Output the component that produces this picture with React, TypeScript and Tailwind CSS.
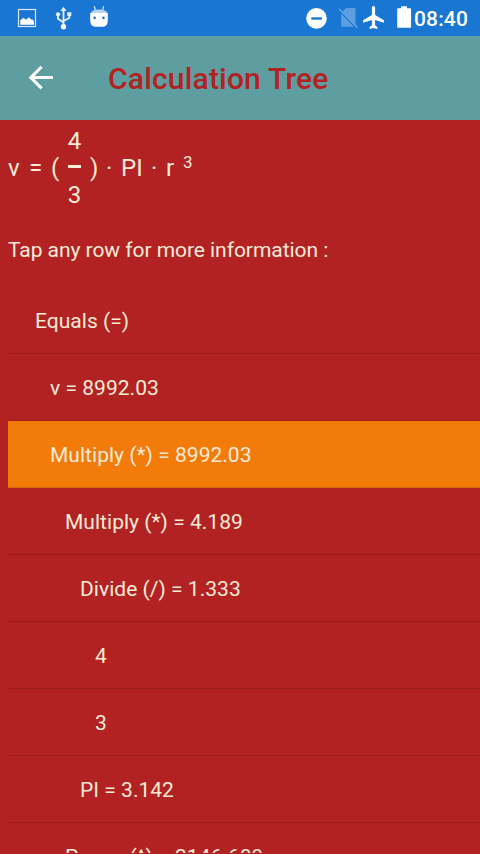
type TreeRow = { label: string; indent: string; selected?: boolean };

const rows: TreeRow[] = [
  { label: "Equals (=)", indent: "pl-[27px]" },
  { label: "v = 8992.03", indent: "pl-[42px]" },
  { label: "Multiply (*) = 8992.03", indent: "pl-[42px]", selected: true },
  { label: "Multiply (*) = 4.189", indent: "pl-[57px]" },
  { label: "Divide (/) = 1.333", indent: "pl-[72px]" },
  { label: "4", indent: "pl-[87px]" },
  { label: "3", indent: "pl-[87px]" },
  { label: "PI = 3.142", indent: "pl-[72px]" },
  { label: "Power (^) = 2146.689", indent: "pl-[57px]" },
];

function StatusBar() {
  return (
    <div className="flex h-9 shrink-0 items-center bg-[#1976d2] pl-[15px] text-white">
      <svg className="ml-[2px] h-9 w-5" viewBox="17 0 20 36" fill="none">
        <rect x="18.5" y="9.5" width="17" height="17" stroke="#dce9f8" strokeWidth="1.2" />
        <path d="M20.3 24.7v-4.4l3.2-2.6 2.3 2 3.3-2.5 2 2.3h1.4l1.4 1.6v3.6z" fill="#fff" />
      </svg>
      <svg className="ml-[17px] h-9 w-5" viewBox="54 0 20 36" fill="none">
        <path d="M63.5 9v17M58 15.5v3.3l5.5 3.7M69.3 15v3l-5.8 3" stroke="#e8f1fb" strokeWidth="1.8" />
        <path d="M60.5 11l3-4.3 3 4.3zM67.3 12.3h4v3.8h-4z" fill="#e8f1fb" />
        <circle cx="58" cy="14.3" r="2.1" fill="#e8f1fb" />
        <circle cx="63.5" cy="26.8" r="2.7" fill="#fff" />
      </svg>
      <svg className="ml-[14px] h-9 w-[22px]" viewBox="88 0 22 36">
        <path d="M94.3 6.2l1 4M103.7 6.2l-1 4" stroke="#dce9f8" strokeWidth="1.2" />
        <path d="M90.6 13.2Q92 9.5 99 9.5t8.4 3.7z" fill="#b9d4f2" />
        <path d="M90.2 13h17.6v7q0 6.8-5 6.8h-7.6q-5 0-5-6.8z" fill="#fff" />
        <circle cx="94.6" cy="17.9" r="1.3" fill="#1976d2" />
        <circle cx="103.4" cy="17.9" r="1.3" fill="#1976d2" />
      </svg>
      <svg className="ml-auto h-9 w-[108px]" viewBox="305 0 108 36">
        <circle cx="316.5" cy="18.4" r="10.3" fill="#fff" />
        <path d="M311.3 18.5h10.6" stroke="#1976d2" strokeWidth="2.4" />
        <path d="M346 8h9.5v18.7h-14.3V13z" fill="#5c9ee0" />
        <path d="M338 8.8l18.7 19.5" stroke="#1976d2" strokeWidth="2" />
        <path d="M339 8.8l18.5 19" stroke="#65a4e3" strokeWidth="1.4" />
        <path d="M371.9 7.7a1.6 1.6 0 0 1 3.2 0v7.2l8.8 5.4v2.4l-8.8-2.7v5.2l2.3 1.8v2l-3.9-1.1-3.9 1.1v-2l2.3-1.8V20l-8.8 2.7v-2.4l8.8-5.4z" fill="#fff" />
        <path d="M401.2 6.3h5.7v2h3.4q.8 0 .8.8v17.8q0 .8-.8.8H398q-.8 0-.8-.8V9.1q0-.8.8-.8h3.2z" fill="#fff" />
      </svg>
      <time className="mr-[12px] ml-px pt-px text-[21px] leading-9 font-medium tracking-[0.15px]">08:40</time>
    </div>
  );
}

function Toolbar() {
  return (
    <header className="flex h-[84px] shrink-0 items-center bg-[#5f9ea0]">
      <button className="ml-[23px] h-9 w-9" aria-label="Back">
        <svg className="h-9 w-9" viewBox="0 0 36 36" fill="none" stroke="#fff" strokeWidth="3">
          <path d="M30 17.6H8M18.6 6.8L7.8 17.6l10.8 10.8" />
        </svg>
      </button>
      <h1 className="ml-[49px] pt-[2px] text-[30px] leading-9 font-medium tracking-[0.19px] text-[#b22222]">Calculation Tree</h1>
    </header>
  );
}

function Formula() {
  return (
    <div className="flex h-[94px] shrink-0 items-center pt-px pl-2 text-[24px] leading-[28px]">
      <span className="w-[21px] pt-px">v</span>
      <span className="w-[22px] pt-px">=</span>
      <span className="w-[17px] pt-px">(</span>
      <span className="flex w-[13px] flex-col items-center pb-[3px]">
        <span className="h-[38px] leading-[28px]">4</span>
        <span className="h-[3px] w-[13px] bg-[#faebd7]" />
        <span className="h-[38px] pt-[13px] leading-[28px]">3</span>
      </span>
      <span className="ml-[9px] w-[16px] pt-px">)</span>
      <span className="w-[15px] pt-px">·</span>
      <span className="w-[30px] pt-px">PI</span>
      <span className="w-[15px] pt-px">·</span>
      <span className="w-[17px] pt-px">r</span>
      <span className="pb-[12px] text-[17px] leading-5">3</span>
    </div>
  );
}

export default function App() {
  return (
    <div className="flex h-[854px] w-[480px] flex-col overflow-hidden bg-[#b22222] pb-px font-['Roboto',sans-serif] text-[#faebd7]">
      <StatusBar />
      <Toolbar />
      <Formula />
      <p className="mt-[22px] mb-[23px] shrink-0 pl-2 text-[21px] leading-7 tracking-[-0.05px]">Tap any row for more information :</p>
      <ul className="ml-2 min-h-0 flex-1 overflow-hidden">
        {rows.map((row) => (
          <li
            key={row.label}
            className={`h-[67px] border-b border-black/12 pt-px text-[21px] leading-[66px] tracking-[0.03px] ${row.indent} ${row.selected ? "bg-[#f37b0a]" : ""}`}
          >
            {row.label}
          </li>
        ))}
      </ul>
    </div>
  );
}
